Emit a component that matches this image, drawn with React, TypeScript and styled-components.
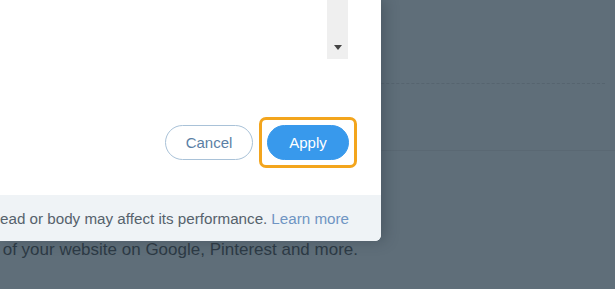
import styled, { createGlobalStyle } from "styled-components";

const GlobalStyle = createGlobalStyle`
  html, body {
    margin: 0;
    padding: 0;
    background: #5f6e79;
    overflow: hidden;
  }
  * {
    box-sizing: border-box;
  }
`;

const Screen = styled.div`
  position: relative;
  width: 615px;
  height: 289px;
  overflow: hidden;
  background: #5f6e79;
  font-family: "Liberation Sans", Arial, sans-serif;
`;

/* page content behind the dimmed overlay */
const BackPage = styled.div`
  display: flex;
  flex-direction: column;
  height: 100%;
`;

const DashedRule = styled.div`
  margin: 83px 10px 0 0;
  border-top: 1px dashed #56646f;
  height: 0;
`;

const SolidRule = styled.div`
  margin: 66px 0 0 20px;
  border-top: 1px solid #5a6873;
  height: 0;
`;

const BackText = styled.div`
  display: flex;
  justify-content: flex-end;
  width: 358px;
  margin-top: 89px;
  font-size: 17px;
  color: #2d3a45;
  white-space: nowrap;
`;

const Modal = styled.div`
  position: absolute;
  top: 0;
  left: 0;
  width: 381px;
  height: 241px;
  display: flex;
  flex-direction: column;
  background: #ffffff;
  border-bottom-right-radius: 6px;
  box-shadow: 4px 0 14px rgba(40, 52, 62, 0.35);
  overflow: hidden;
`;

const EditorArea = styled.div`
  display: flex;
  justify-content: flex-end;
  height: 59px;
  margin-right: 33px;
`;

const ScrollTrack = styled.div`
  width: 21px;
  height: 100%;
  background: #efefef;
  display: flex;
  align-items: flex-end;
  justify-content: center;
  padding-bottom: 9px;
`;

const ArrowDown = styled.div`
  width: 0;
  height: 0;
  border-left: 4.5px solid transparent;
  border-right: 4.5px solid transparent;
  border-top: 5px solid #444444;
`;

const Actions = styled.div`
  display: flex;
  justify-content: flex-end;
  align-items: center;
  gap: 6px;
  margin-top: 58px;
  padding-right: 24px;
`;

const Button = styled.button<{ $primary?: boolean }>`
  height: 35px;
  border-radius: 18px;
  font-family: "Liberation Sans", Arial, sans-serif;
  font-size: 15px;
  cursor: pointer;
  padding: 0;
  border: 1px solid ${(p) => (p.$primary ? "#3899ec" : "#a9c2d8")};
  background: ${(p) => (p.$primary ? "#3899ec" : "#ffffff")};
  color: ${(p) => (p.$primary ? "#ffffff" : "#5b7fa5")};
  width: ${(p) => (p.$primary ? "82px" : "88px")};
`;

const FocusRing = styled.div`
  padding: 5px;
  border: 3px solid #f3a51d;
  border-radius: 7px;
`;

const Footer = styled.div`
  display: flex;
  justify-content: flex-end;
  align-items: center;
  margin-top: auto;
  height: 46px;
  padding-right: 32px;
  background: #eff3f6;
  font-size: 15.2px;
  color: #56626c;
  white-space: nowrap;
`;

const LearnMore = styled.a`
  color: #6f95c3;
  text-decoration: none;
  margin-left: 4px;
`;

function App() {
  return (
    <Screen>
      <GlobalStyle />
      <BackPage>
        <DashedRule />
        <SolidRule />
        <BackText>
          <span>of your website on Google, Pinterest and more.</span>
        </BackText>
      </BackPage>
      <Modal>
        <EditorArea>
          <ScrollTrack>
            <ArrowDown />
          </ScrollTrack>
        </EditorArea>
        <Actions>
          <Button>Cancel</Button>
          <FocusRing>
            <Button $primary>Apply</Button>
          </FocusRing>
        </Actions>
        <Footer>
          <span>ead or body may affect its performance.</span>
          <LearnMore href="#">Learn more</LearnMore>
        </Footer>
      </Modal>
    </Screen>
  );
}

export default App;
